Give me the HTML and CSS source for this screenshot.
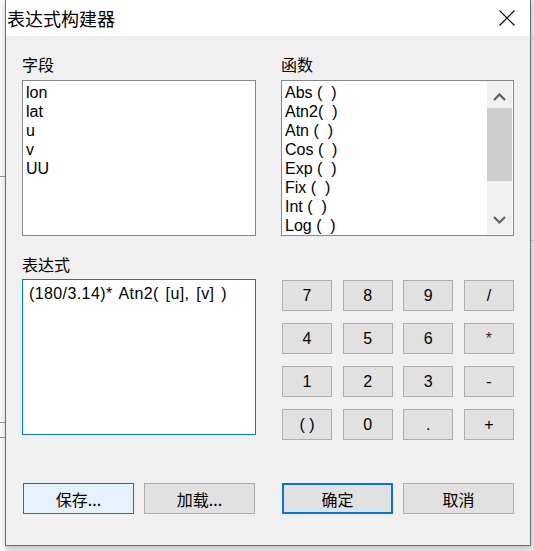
FILE: index.html
```html
<!DOCTYPE html>
<html lang="zh-CN">
<head>
<meta charset="utf-8">
<title>表达式构建器</title>
<link rel="stylesheet" href="styles.css">
</head>
<body>
<div class="desktop">
  <div class="dialog">
    <div class="titlebar">
      <span class="title">表达式构建器</span>
      <svg class="close" width="16" height="16" viewBox="0 0 16 16"><path d="M0.5 0.5 L15.5 15.5 M15.5 0.5 L0.5 15.5" stroke="#000" stroke-width="1.1" fill="none"/></svg>
    </div>
    <div class="body">
      <div class="row top">
        <div class="col">
          <div class="label">字段</div>
          <div class="listbox">
            <div class="items">
              <div class="item">lon</div>
              <div class="item">lat</div>
              <div class="item">u</div>
              <div class="item">v</div>
              <div class="item">UU</div>
            </div>
          </div>
        </div>
        <div class="col">
          <div class="label">函数</div>
          <div class="listbox">
            <div class="items">
              <div class="item">Abs (  )</div>
              <div class="item">Atn2(  )</div>
              <div class="item">Atn (  )</div>
              <div class="item">Cos (  )</div>
              <div class="item">Exp (  )</div>
              <div class="item">Fix (  )</div>
              <div class="item">Int (  )</div>
              <div class="item">Log (  )</div>
            </div>
            <div class="vscroll">
              <div class="arrow up"><svg width="13" height="9" viewBox="0 0 13 9"><path d="M1 8 L6.5 2.5 L12 8" stroke="#606060" stroke-width="2.2" fill="none"/></svg></div>
              <div class="thumb"></div>
              <div class="spacer"></div>
              <div class="arrow down"><svg width="13" height="9" viewBox="0 0 13 9"><path d="M1 1 L6.5 6.5 L12 1" stroke="#606060" stroke-width="2.2" fill="none"/></svg></div>
            </div>
          </div>
        </div>
      </div>
      <div class="row mid">
        <div class="col">
          <div class="label label-mid">表达式</div>
          <div class="exprbox"><span class="expr">(180/3.14)* Atn2( [u], [v] )</span></div>
        </div>
        <div class="keypad">
          <button class="key">7</button>
          <button class="key">8</button>
          <button class="key">9</button>
          <button class="key">/</button>
          <button class="key">4</button>
          <button class="key">5</button>
          <button class="key">6</button>
          <button class="key star">*</button>
          <button class="key">1</button>
          <button class="key">2</button>
          <button class="key">3</button>
          <button class="key">-</button>
          <button class="key">( )</button>
          <button class="key">0</button>
          <button class="key">.</button>
          <button class="key">+</button>
        </div>
      </div>
      <div class="row actions">
        <div class="btngroup">
          <button class="btn hover">保存...</button>
          <button class="btn">加载...</button>
        </div>
        <div class="btngroup">
          <button class="btn default">确定</button>
          <button class="btn">取消</button>
        </div>
      </div>
    </div>
  </div>
</div>
</body>
</html>
```
FILE: styles.css
```css
* { box-sizing: border-box; }
html, body {
  margin: 0;
  padding: 0;
  width: 534px;
  height: 551px;
  overflow: hidden;
}
body {
  font-family: "Liberation Sans", Arial, sans-serif;
  color: #000;
}
.desktop {
  width: 534px;
  height: 551px;
  background:
    linear-gradient(#a0a0a0, #a0a0a0) 0 176px / 5px 1px no-repeat,
    linear-gradient(#a0a0a0, #a0a0a0) 0 422px / 5px 1px no-repeat,
    linear-gradient(#a0a0a0, #a0a0a0) 0 437px / 5px 1px no-repeat,
    linear-gradient(#c8c8c8, #c8c8c8) 530px 38px / 4px 1px no-repeat,
    linear-gradient(#c8c8c8, #c8c8c8) 530px 240px / 4px 1px no-repeat,
    linear-gradient(to right, #ffffff 0 5px, #ececec 5px);
  padding-left: 5px;
}
.dialog {
  width: 526px;
  height: 546px;
  background: #f0f0f0;
  border: 1px solid #6e6e6e;
  border-top: none;
  box-shadow: 0 2px 8px rgba(0, 0, 0, 0.22);
  display: flex;
  flex-direction: column;
}
.titlebar {
  height: 36px;
  flex: none;
  background: #fff;
  display: flex;
  align-items: flex-start;
  justify-content: space-between;
  padding-left: 1px;
}
.title {
  font-family: "Noto Sans CJK SC", "Liberation Sans", sans-serif;
  font-size: 18px;
  line-height: 36px;
}
.close {
  display: block;
  margin: 10px 15px 0 0;
}
.body {
  padding: 18px 16px 0 16px;
  font-family: "Liberation Sans", "Noto Sans CJK SC", sans-serif;
}
.row {
  display: grid;
  grid-template-columns: 234px 233px;
  column-gap: 25px;
}
.label {
  font-family: "Noto Sans CJK SC", sans-serif;
  font-size: 16px;
  line-height: 20px;
  height: 20px;
  margin-bottom: 6px;
}
.label-mid { margin-bottom: 5px; }
.listbox {
  height: 156px;
  background: #fff;
  border: 1px solid #828790;
  display: flex;
}
.items {
  flex: 1;
  padding: 2px 3px;
  font-size: 16px;
  line-height: 19px;
}
.item { white-space: pre; }
.vscroll {
  width: 25px;
  flex: none;
  margin: 0 1px 1px 0;
  background: #f0f0f0;
  display: flex;
  flex-direction: column;
}
.arrow {
  display: flex;
  justify-content: center;
}
.arrow svg { display: block; }
.arrow.up { height: 27px; padding-top: 11px; }
.thumb { height: 73px; background: #cdcdcd; }
.spacer { flex: 1; }
.arrow.down { height: 26px; padding-top: 8px; }

.mid { margin-top: 18px; }
.exprbox {
  height: 156px;
  background: #fff;
  border: 1px solid #0078d7;
  padding: 4px 6px;
  font-size: 16px;
  line-height: 19px;
}
.expr {
  white-space: pre;
  word-spacing: 2px;
  letter-spacing: 0.4px;
}
.keypad {
  margin: 26px 0 0 1px;
  width: 232px;
  display: grid;
  grid-template-columns: repeat(4, 50px);
  grid-auto-rows: 31px;
  row-gap: 12px;
  justify-content: space-between;
  align-content: start;
}
.key, .btn {
  font-family: "Liberation Sans", "Noto Sans CJK SC", sans-serif;
  font-size: 16px;
  color: #000;
  background: #e1e1e1;
  border: 1px solid #adadad;
  padding: 0;
  margin: 0;
}
.key.star { color: #4a1848; }
.actions { margin-top: 43px; }
.btngroup {
  display: flex;
  gap: 10px;
  padding-left: 1px;
}
.btn {
  width: 111px;
  height: 31px;
  font-family: "Noto Sans CJK SC", sans-serif;
}
.btn.hover {
  background: #e5f1fb;
  border-color: #0078d7;
}
.btn.default {
  border: 2px solid #0078d7;
}
```
